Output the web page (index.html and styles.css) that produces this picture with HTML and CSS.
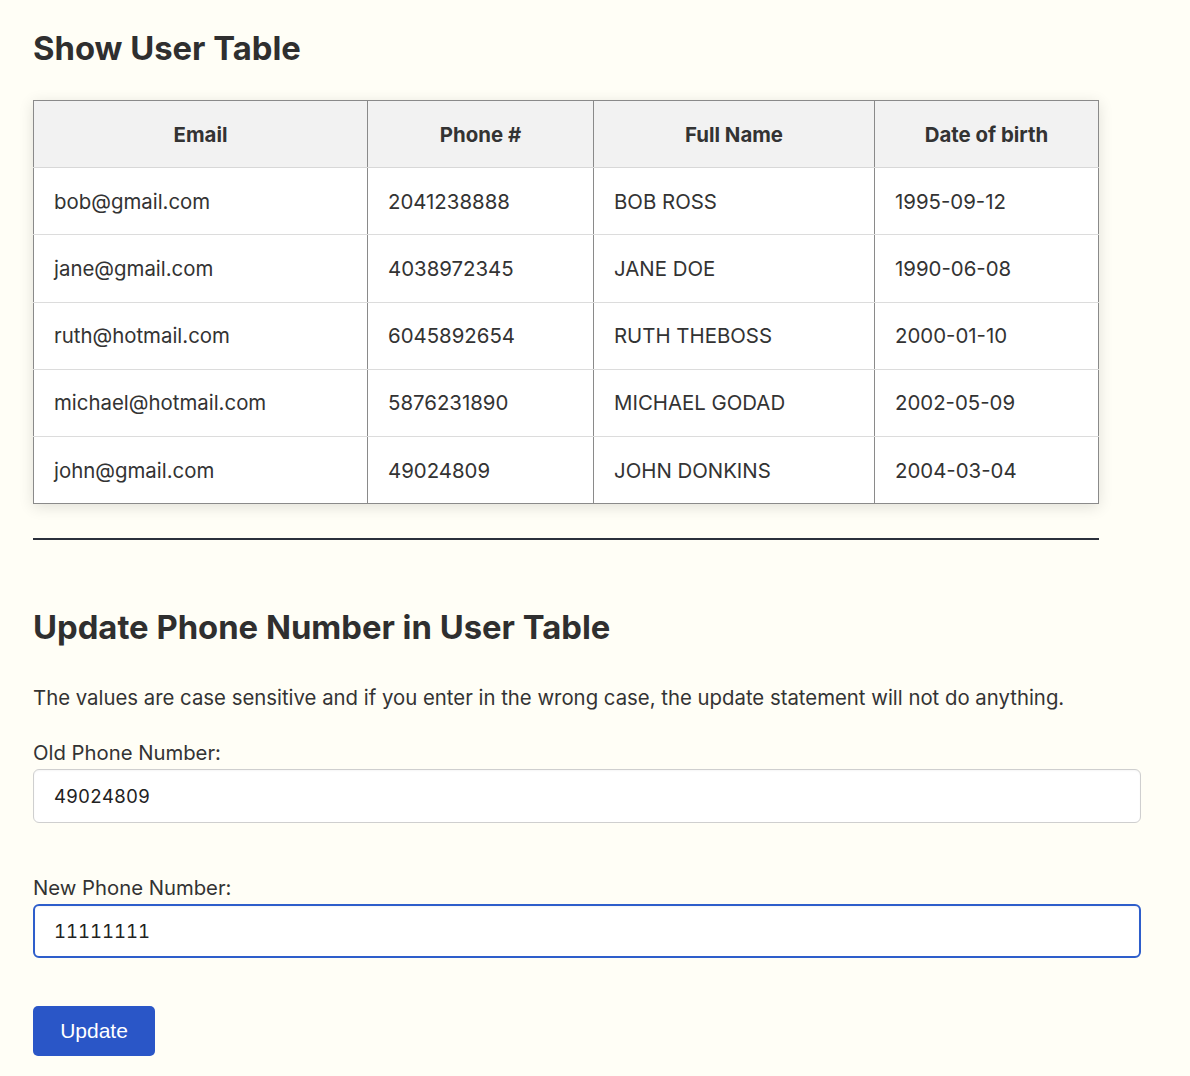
FILE: index.html
```html
<!DOCTYPE html>
<html lang="en">
<head>
<meta charset="utf-8">
<title>User Table</title>
<link rel="stylesheet" href="styles.css">
</head>
<body>
<main class="page">
  <h2 class="title">Show User Table</h2>
  <table class="users">
    <thead>
      <tr><th class="c-email">Email</th><th class="c-phone">Phone #</th><th class="c-name">Full Name</th><th class="c-dob">Date of birth</th></tr>
    </thead>
    <tbody>
      <tr><td>bob@gmail.com</td><td>2041238888</td><td>BOB ROSS</td><td>1995-09-12</td></tr>
      <tr><td>jane@gmail.com</td><td>4038972345</td><td>JANE DOE</td><td>1990-06-08</td></tr>
      <tr><td>ruth@hotmail.com</td><td>6045892654</td><td>RUTH THEBOSS</td><td>2000-01-10</td></tr>
      <tr><td>michael@hotmail.com</td><td>5876231890</td><td>MICHAEL GODAD</td><td>2002-05-09</td></tr>
      <tr><td>john@gmail.com</td><td>49024809</td><td>JOHN DONKINS</td><td>2004-03-04</td></tr>
    </tbody>
  </table>
  <hr class="rule">
  <h2 class="title title-second">Update Phone Number in User Table</h2>
  <p class="note">The values are case sensitive and if you enter in the wrong case, the update statement will not do anything.</p>
  <form class="form">
    <label class="label" for="old">Old Phone Number:</label>
    <input class="field" id="old" type="text" value="49024809">
    <label class="label label-gap" for="new">New Phone Number:</label>
    <input class="field field-focus" id="new" type="text" value="11111111">
    <div class="actions"><button class="btn" type="button">Update</button></div>
  </form>
</main>
</body>
</html>
```
FILE: styles.css
```css
html, body {
  margin: 0;
  padding: 0;
  background: #fffef6;
}
body {
  font-family: Inter, "Noto Sans", sans-serif;
  color: #333;
}
.page {
  padding: 23px 49px 0 33px;
  width: 1108px;
}
.title {
  font-size: 32.8px;
  font-weight: 700;
  margin: 0;
  line-height: 50px;
  color: #2f2f2f;
}
.users {
  margin-top: 27px;
  width: 1066px;
  border-collapse: collapse;
  border: 1px solid #8a8a8a;
  background: #fff;
  box-shadow: 0 3px 14px rgba(0,0,0,0.12);
  font-size: 20.4px;
}
.users th {
  background: #f2f2f2;
  font-weight: 700;
  height: 66px;
  text-align: center;
  border-left: 1px solid #8a8a8a;
  border-bottom: 1px solid #d8d8d8;
  padding: 0;
}
.users td {
  height: 66.25px;
  padding: 0 20px;
  border-left: 1px solid #8a8a8a;
  border-bottom: 1px solid #dcdcdc;
}
.users tbody tr:last-child td { border-bottom: 1px solid #8a8a8a; }
.c-email { width: 333px; }
.c-phone { width: 225px; }
.c-name { width: 280px; }
.rule {
  width: 1066px;
  margin: 34px 0 0 0;
  border: 0;
  border-top: 2px solid #2b303b;
}
.title-second { margin-top: 62px; }
.note {
  font-size: 20.35px;
  margin: 31px 0 0 0;
  line-height: 30px;
}
.form {
  display: flex;
  flex-direction: column;
  align-items: flex-start;
  margin-top: 28px;
}
.label {
  font-size: 20.3px;
  line-height: 24px;
}
.label-gap { margin-top: 53px; }
.field {
  box-sizing: border-box;
  width: 1108px;
  height: 54px;
  margin-top: 4px;
  border: 1px solid #cfcfcf;
  border-radius: 6px;
  background: #fff;
  font-family: Inter, "Noto Sans", sans-serif;
  font-size: 18.5px;
  font-feature-settings: "tnum";
  color: #222;
  padding: 0 20px;
  box-shadow: inset 0 1px 2px rgba(0,0,0,0.04);
  outline: none;
}
.field-focus {
  border: 2px solid #2e5ecb;
  padding: 0 19px;
}
.actions { margin-top: 48px; }
.btn {
  width: 122px;
  height: 50px;
  border: 0;
  border-radius: 5px;
  background: #2a56c7;
  color: #fff;
  font-family: "Liberation Sans", Arial, sans-serif;
  font-size: 21px;
  line-height: 48px;
  padding: 0;
}
```
